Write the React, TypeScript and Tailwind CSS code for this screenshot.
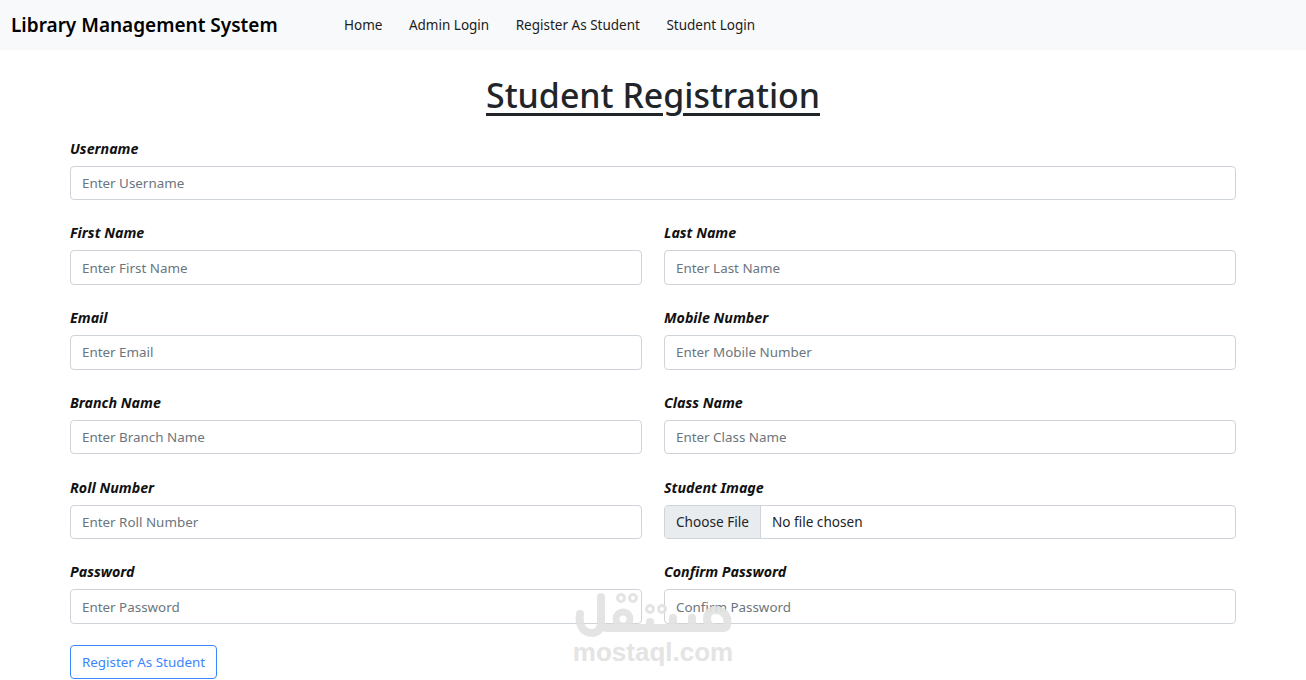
const font = "font-['Noto_Sans','Open_Sans',sans-serif]";

function Field({ label, placeholder }: { label: string; placeholder: string }) {
  return (
    <div className="flex flex-col h-[84.75px]">
      <label className="h-[24px] text-[14.25px] leading-[23px] font-bold italic text-[#111]">{label}</label>
      <input
        placeholder={placeholder}
        className="w-full h-[34.5px] mt-[5px] px-[11px] border border-[#ced4da] rounded-[4px] bg-white text-[13.4px] placeholder:text-[#6c757d] outline-none"
      />
    </div>
  );
}

function FileField({ label }: { label: string }) {
  return (
    <div className="flex flex-col h-[84.75px]">
      <label className="h-[24px] text-[14.25px] leading-[23px] font-bold italic text-[#111]">{label}</label>
      <div className="flex w-full h-[34.5px] mt-[5px] border border-[#ced4da] rounded-[4px] overflow-hidden text-[13.6px] text-[#212529]">
        <span className="flex items-center pt-[1px] px-[11px] bg-[#e9ecef] border-r border-[#ced4da]">Choose File</span>
        <span className="flex items-center pt-[1px] px-[11px] bg-white">No file chosen</span>
      </div>
    </div>
  );
}

export default function App() {
  return (
    <div className={`relative h-[680px] overflow-hidden bg-white text-[#212529] ${font}`}>
      <nav className="flex items-center h-[50px] bg-[#f8f9fa] pl-[11px]">
        <a className="w-[333px] text-[19px] font-semibold text-black whitespace-nowrap">Library Management System</a>
        <div className="flex gap-[26.5px] text-[13.5px] text-[#1c1c1c]">
          <a>Home</a>
          <a>Admin Login</a>
          <a>Register As Student</a>
          <a>Student Login</a>
        </div>
      </nav>
      <h1 className="mt-[20px] h-[48px] text-center text-[33.9px] leading-[50px] font-medium underline underline-offset-[5px]">Student Registration</h1>
      <form className="mx-[70px] mt-[18.5px]">
        <Field label="Username" placeholder="Enter Username" />
        <div className="grid grid-cols-2 gap-x-[22px]">
          <Field label="First Name" placeholder="Enter First Name" />
          <Field label="Last Name" placeholder="Enter Last Name" />
          <Field label="Email" placeholder="Enter Email" />
          <Field label="Mobile Number" placeholder="Enter Mobile Number" />
          <Field label="Branch Name" placeholder="Enter Branch Name" />
          <Field label="Class Name" placeholder="Enter Class Name" />
          <Field label="Roll Number" placeholder="Enter Roll Number" />
          <FileField label="Student Image" />
          <Field label="Password" placeholder="Enter Password" />
          <Field label="Confirm Password" placeholder="Confirm Password" />
        </div>
        <button type="button" className="block mt-[-0.25px] w-[147px] h-[34.5px] border border-[#3b86fd] rounded-[4px] bg-white text-[13.4px] text-[#3b86fd]">Register As Student</button>
      </form>
      <div className="absolute left-[573px] top-[592px] w-[160px] flex flex-col items-center pointer-events-none opacity-90">
        <svg width="158" height="50" viewBox="0 0 158 50" fill="none" stroke="#e2e2e2" strokeWidth="8" strokeLinecap="round" strokeLinejoin="round">
          <path d="M6 22 C4 34 10 41 18 41 C24 41 27 37 27 30 V5" />
          <path d="M27 32 C27 36 31 36 36 36 H150 C153 36 154 32 153 26 C151 20 146 18 141 18 C136 18 133 22 133 27 C133 32 137 36 142 36" />
          <circle cx="49" cy="27" r="7" strokeWidth="7" />
          <path d="M76 36 V30 M99 36 V26 M118 36 V26" />
          <circle cx="47" cy="6" r="1.5" strokeWidth="7" />
          <circle cx="59" cy="6" r="1.5" strokeWidth="7" />
          <circle cx="76" cy="17" r="1.5" strokeWidth="7" />
          <circle cx="88" cy="17" r="1.5" strokeWidth="7" />
        </svg>
        <span className="mt-[-5px] font-['Liberation_Sans',sans-serif] text-[26px] leading-[30px] font-bold text-[#e2e2e2] whitespace-nowrap">mostaql.com</span>
      </div>
    </div>
  );
}
